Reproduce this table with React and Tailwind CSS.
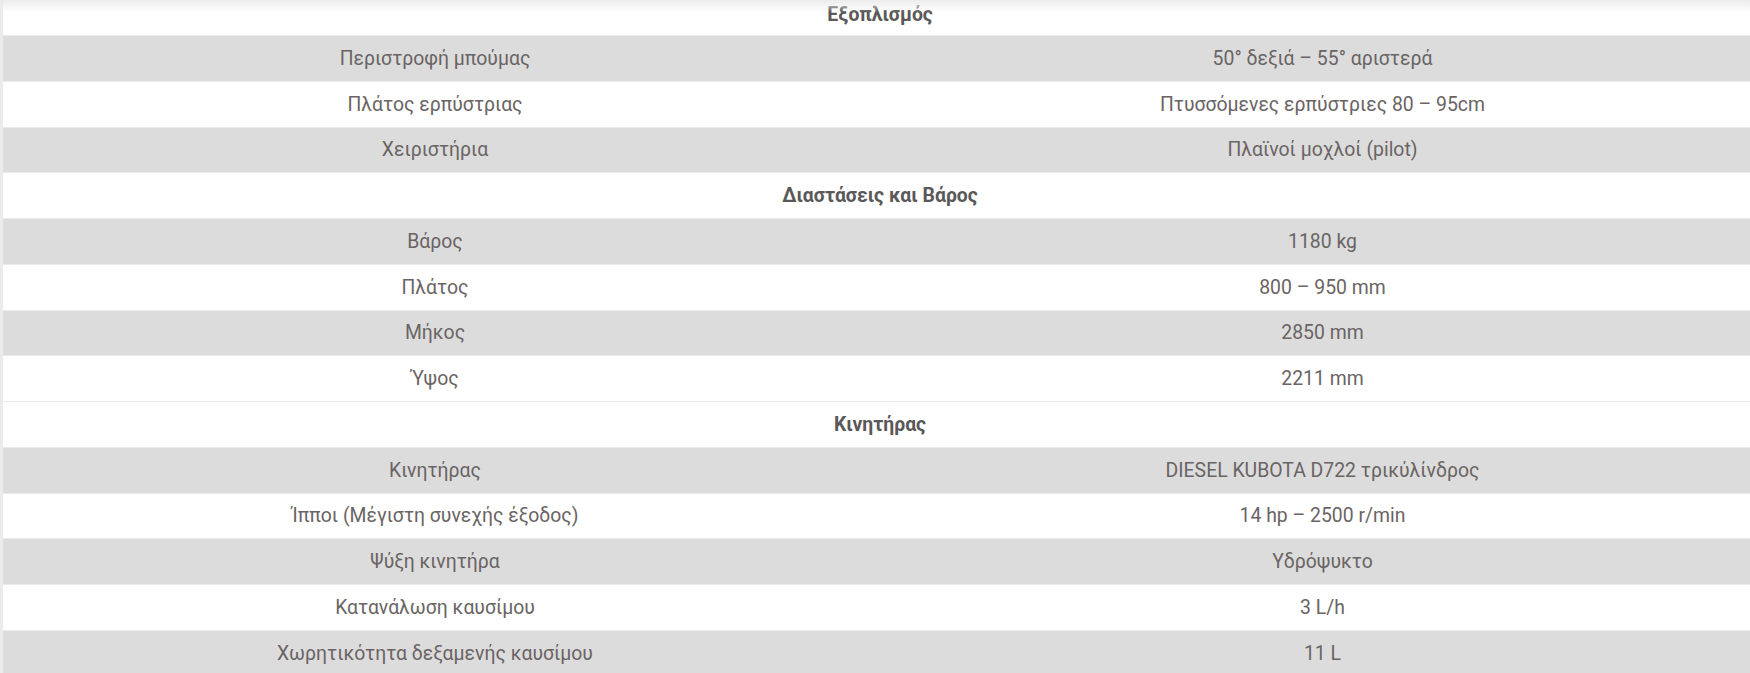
import React from "react";

const sections = [
  {
    title: "Εξοπλισμός",
    rows: [
      ["Περιστροφή μπούμας", "50° δεξιά – 55° αριστερά"],
      ["Πλάτος ερπύστριας", "Πτυσσόμενες ερπύστριες 80 – 95cm"],
      ["Χειριστήρια", "Πλαϊνοί μοχλοί (pilot)"],
    ],
  },
  {
    title: "Διαστάσεις και Βάρος",
    rows: [
      ["Βάρος", "1180 kg"],
      ["Πλάτος", "800 – 950 mm"],
      ["Μήκος", "2850 mm"],
      ["Ύψος", "2211 mm"],
    ],
  },
  {
    title: "Κινητήρας",
    rows: [
      ["Κινητήρας", "DIESEL KUBOTA D722 τρικύλίνδρος"],
      ["Ίπποι (Μέγιστη συνεχής έξοδος)", "14 hp – 2500 r/min"],
      ["Ψύξη κινητήρα", "Υδρόψυκτο"],
      ["Κατανάλωση καυσίμου", "3 L/h"],
      ["Χωρητικότητα δεξαμενής καυσίμου", "11 L"],
    ],
  },
];

export default function App() {
  let stripe = 0;
  return (
    <div className="h-[673px] w-[1750px] overflow-hidden bg-[#ebebeb] pl-[3px] font-['Roboto',sans-serif] text-[19.4px] text-[#6a6464]">
      <div className="relative w-[1775px] bg-white">
        <div className="pointer-events-none absolute inset-x-0 top-0 h-[12px] bg-gradient-to-b from-[#ececec] to-transparent" />
        {sections.map((s, si) => {
          stripe = 0;
          return (
            <div key={s.title}>
              <div
                className={`flex items-center justify-center font-bold text-[#5a5858] w-[1754px] ${si === 0 ? "h-[35px] pb-[5px]" : "h-[45.75px] border-t border-[#ebebeb]"}`}
              >
                {s.title}
              </div>
              {s.rows.map(([k, v]) => {
                stripe++;
                const gray = stripe % 2 === 1;
                return (
                  <div
                    key={k}
                    className={`grid grid-cols-[864px_911px] h-[45.75px] border-t border-[#ebebeb] ${gray ? "bg-[#dcdcdc]" : "bg-white"}`}
                  >
                    <div className="flex items-center justify-center">{k}</div>
                    <div className="flex items-center justify-center">{v}</div>
                  </div>
                );
              })}
            </div>
          );
        })}
      </div>
    </div>
  );
}
